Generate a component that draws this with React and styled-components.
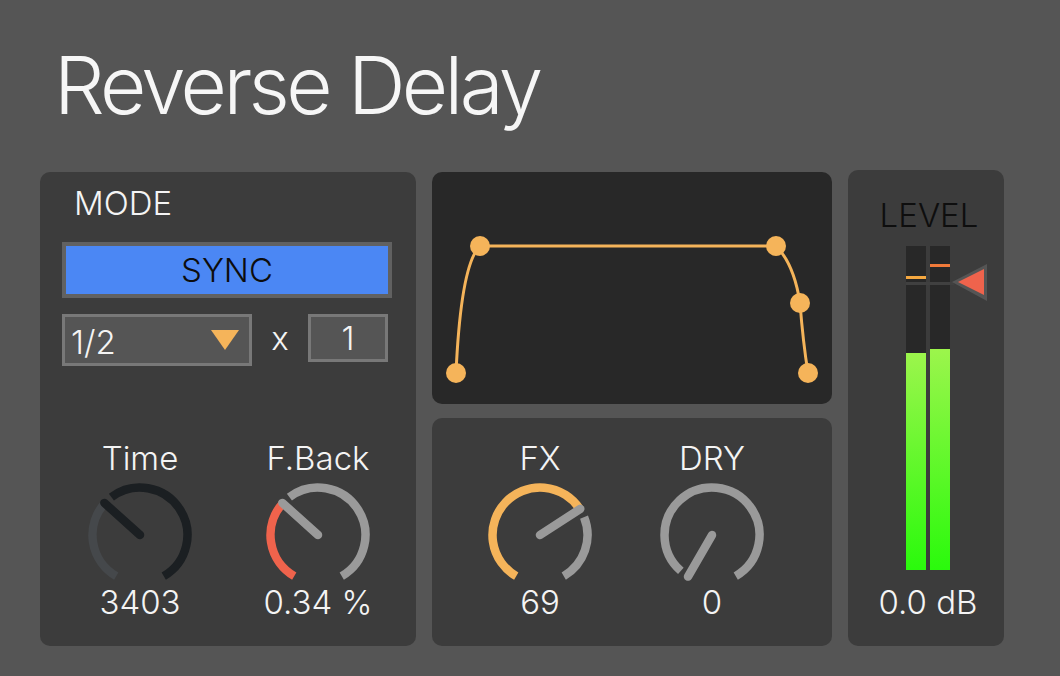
import React from 'react'
import styled, { createGlobalStyle } from 'styled-components'

const GlobalStyle = createGlobalStyle`
    html, body {
        margin: 0;
        padding: 0;
        background: #555555;
    }
    body {
        font-family: 'Inter', 'Liberation Sans', sans-serif;
        font-weight: 300;
        color: #f4f4f4;
    }
`

const ORANGE = '#f5b45a'
const GREY = '#9a9a9a'

const polar = (cx, cy, r, deg) => {
    const a = (deg * Math.PI) / 180
    return [cx + r * Math.sin(a), cy - r * Math.cos(a)]
}

const arcPath = (cx, cy, r, from, to) => {
    const [x1, y1] = polar(cx, cy, r, from)
    const [x2, y2] = polar(cx, cy, r, to)
    const large = to - from > 180 ? 1 : 0
    return `M${x1.toFixed(2)} ${y1.toFixed(2)} A${r} ${r} 0 ${large} 1 ${x2.toFixed(2)} ${y2.toFixed(2)}`
}

const Knob = ({ label, value, angle, valueColor, restColor, needleColor }) => {
    const c = 55
    const r = 47.5
    const [nx, ny] = polar(c, c, 48, angle)
    return (
        <KnobColumn>
            <KnobLabel>{label}</KnobLabel>
            <KnobDial width="110" height="110" viewBox="0 0 110 110">
                {angle > -150 && (
                    <path d={arcPath(c, c, r, -150, angle)} stroke={valueColor} strokeWidth="8.5" fill="none" />
                )}
                <path d={arcPath(c, c, r, angle + 11, 150)} stroke={restColor} strokeWidth="8.5" fill="none" />
                <line x1={c} y1={c} x2={nx} y2={ny} stroke={needleColor} strokeWidth="8.5" strokeLinecap="round" />
            </KnobDial>
            <KnobValue>{value}</KnobValue>
        </KnobColumn>
    )
}

const Envelope = () => (
    <svg width="400" height="232" viewBox="0 0 400 232">
        <path
            d="M24 201 Q29 92 48 74 L344 74 Q362 92 368 131 Q371 170 376 201"
            stroke={ORANGE}
            strokeWidth="3"
            fill="none"
        />
        {[[24, 201], [48, 74], [344, 74], [368, 131], [376, 201]].map(([x, y]) => (
            <circle key={x} cx={x} cy={y} r="10" fill={ORANGE} />
        ))}
    </svg>
)

const App = () => {
    return (
        <Page>
            <GlobalStyle />
            <Title>Reverse Delay</Title>
            <Row>
                <ModePanel>
                    <ModeLabel>MODE</ModeLabel>
                    <SyncButton>SYNC</SyncButton>
                    <RateRow>
                        <Dropdown>
                            <span>1/2</span>
                            <DropArrow />
                        </Dropdown>
                        <Times>x</Times>
                        <NumberBox>1</NumberBox>
                    </RateRow>
                    <KnobRow>
                        <Knob label="Time" value="3403" angle={-48} valueColor="#45484b" restColor="#1b1f22" needleColor="#1b1f22" />
                        <Knob label="F.Back" value="0.34 %" angle={-48} valueColor="#ef634c" restColor={GREY} needleColor={GREY} />
                    </KnobRow>
                </ModePanel>
                <MiddleColumn>
                    <EnvelopePanel>
                        <Envelope />
                    </EnvelopePanel>
                    <MixPanel>
                        <Knob label="FX" value="69" angle={57} valueColor={ORANGE} restColor={GREY} needleColor={GREY} />
                        <Knob label="DRY" value="0" angle={-150} valueColor={GREY} restColor={GREY} needleColor={GREY} />
                    </MixPanel>
                </MiddleColumn>
                <LevelPanel>
                    <LevelLabel>LEVEL</LevelLabel>
                    <Meter>
                        <MeterBar>
                            <MeterFill style={{ height: `${(570 - 353) / 324 * 100}%` }} />
                            <PeakMark $top={30} $color="#f5a840" />
                        </MeterBar>
                        <MeterBar>
                            <MeterFill style={{ height: `${(570 - 349) / 324 * 100}%` }} />
                            <PeakMark $top={18} $color="#f07a3a" />
                        </MeterBar>
                        <Threshold />
                        <Handle width="38" height="40" viewBox="0 0 38 40">
                            <polygon points="1,19 36,1 36,38" fill="#555555" />
                            <polygon points="7,19 33,6 33,32" fill="#ef634c" />
                        </Handle>
                    </Meter>
                    <LevelValue>0.0 dB</LevelValue>
                </LevelPanel>
            </Row>
        </Page>
    )
}

const Page = styled.div`
    width: 1060px;
    height: 676px;
    overflow: hidden;
    background: #555555;
`

const Title = styled.h1`
    margin: 0;
    padding: 40px 0 0 54px;
    height: 130px;
    box-sizing: border-box;
    font-size: 80px;
    line-height: 90px;
    font-weight: 300;
    letter-spacing: -3.6px;
    color: #f6f6f6;
`

const Row = styled.div`
    display: flex;
    align-items: flex-end;
    gap: 16px;
    padding-left: 40px;
    margin-top: 40px;
`

const Panel = styled.div`
    background: #3c3c3c;
    border-radius: 10px;
    box-sizing: border-box;
`

const ModePanel = styled(Panel)`
    width: 376px;
    height: 474px;
    padding: 13px 0 0 22px;
    display: flex;
    flex-direction: column;
`

const ModeLabel = styled.div`
    font-size: 33px;
    line-height: 36px;
    padding-left: 12px;
`

const SyncButton = styled.div`
    margin-top: 21px;
    width: 330px;
    height: 56px;
    box-sizing: border-box;
    border: 4px solid #616161;
    background: #4b87f4;
    color: #0d0d0d;
    font-size: 33px;
    display: flex;
    align-items: center;
    justify-content: center;
`

const RateRow = styled.div`
    margin-top: 16px;
    display: flex;
    align-items: flex-start;
`

const Dropdown = styled.div`
    width: 190px;
    height: 52px;
    box-sizing: border-box;
    border: 3px solid #787878;
    background: #555555;
    display: flex;
    align-items: center;
    justify-content: space-between;
    padding: 4px 10px 0 6px;
    font-size: 33px;
`

const DropArrow = styled.div`
    width: 0;
    height: 0;
    border-left: 14px solid transparent;
    border-right: 14px solid transparent;
    border-top: 20px solid ${ORANGE};
    margin-bottom: 4px;
`

const Times = styled.div`
    width: 56px;
    text-align: center;
    font-size: 33px;
    line-height: 48px;
`

const NumberBox = styled.div`
    width: 80px;
    height: 48px;
    box-sizing: border-box;
    border: 3px solid #787878;
    background: #555555;
    font-size: 33px;
    display: flex;
    align-items: center;
    justify-content: center;
`

const KnobRow = styled.div`
    margin-top: 74px;
    margin-left: -22px;
    display: flex;
    gap: 68px;
    padding-left: 45px;
`

const KnobColumn = styled.div`
    width: 110px;
    display: flex;
    flex-direction: column;
    align-items: center;
`

const KnobLabel = styled.div`
    font-size: 33px;
    line-height: 36px;
    white-space: nowrap;
`

const KnobDial = styled.svg`
    display: block;
    margin-top: 4px;
`

const KnobValue = styled.div`
    font-size: 33px;
    line-height: 30px;
    margin-top: -3px;
    white-space: nowrap;
`

const MiddleColumn = styled.div`
    width: 400px;
    display: flex;
    flex-direction: column;
    gap: 14px;
`

const EnvelopePanel = styled(Panel)`
    height: 232px;
    background: #282828;
    svg {
        display: block;
    }
`

const MixPanel = styled(Panel)`
    height: 228px;
    display: flex;
    gap: 62px;
    padding: 22px 0 0 53px;
`

const LevelPanel = styled(Panel)`
    width: 156px;
    height: 476px;
    padding-top: 27px;
    display: flex;
    flex-direction: column;
    align-items: center;
`

const LevelLabel = styled.div`
    font-size: 33px;
    line-height: 36px;
    color: #0e0e0e;
    margin-left: 6px;
`

const Meter = styled.div`
    position: relative;
    margin-top: 13px;
    margin-left: 4px;
    height: 324px;
    display: flex;
    gap: 4px;
`

const MeterBar = styled.div`
    position: relative;
    width: 20px;
    height: 100%;
    background: #282828;
    display: flex;
    align-items: flex-end;
`

const MeterFill = styled.div`
    width: 100%;
    background: linear-gradient(to bottom, #9cf54c, #2afa0c);
`

const PeakMark = styled.div`
    position: absolute;
    left: 0;
    right: 0;
    top: ${p => p.$top}px;
    height: 3px;
    background: ${p => p.$color};
`

const Threshold = styled.div`
    position: absolute;
    left: 0;
    width: 48px;
    top: 36px;
    height: 3px;
    background: #404040;
`

const Handle = styled.svg`
    position: absolute;
    left: 45px;
    top: 17px;
`

const LevelValue = styled.div`
    margin-top: 17px;
    font-size: 33px;
    line-height: 30px;
    margin-left: 4px;
`

export default App
